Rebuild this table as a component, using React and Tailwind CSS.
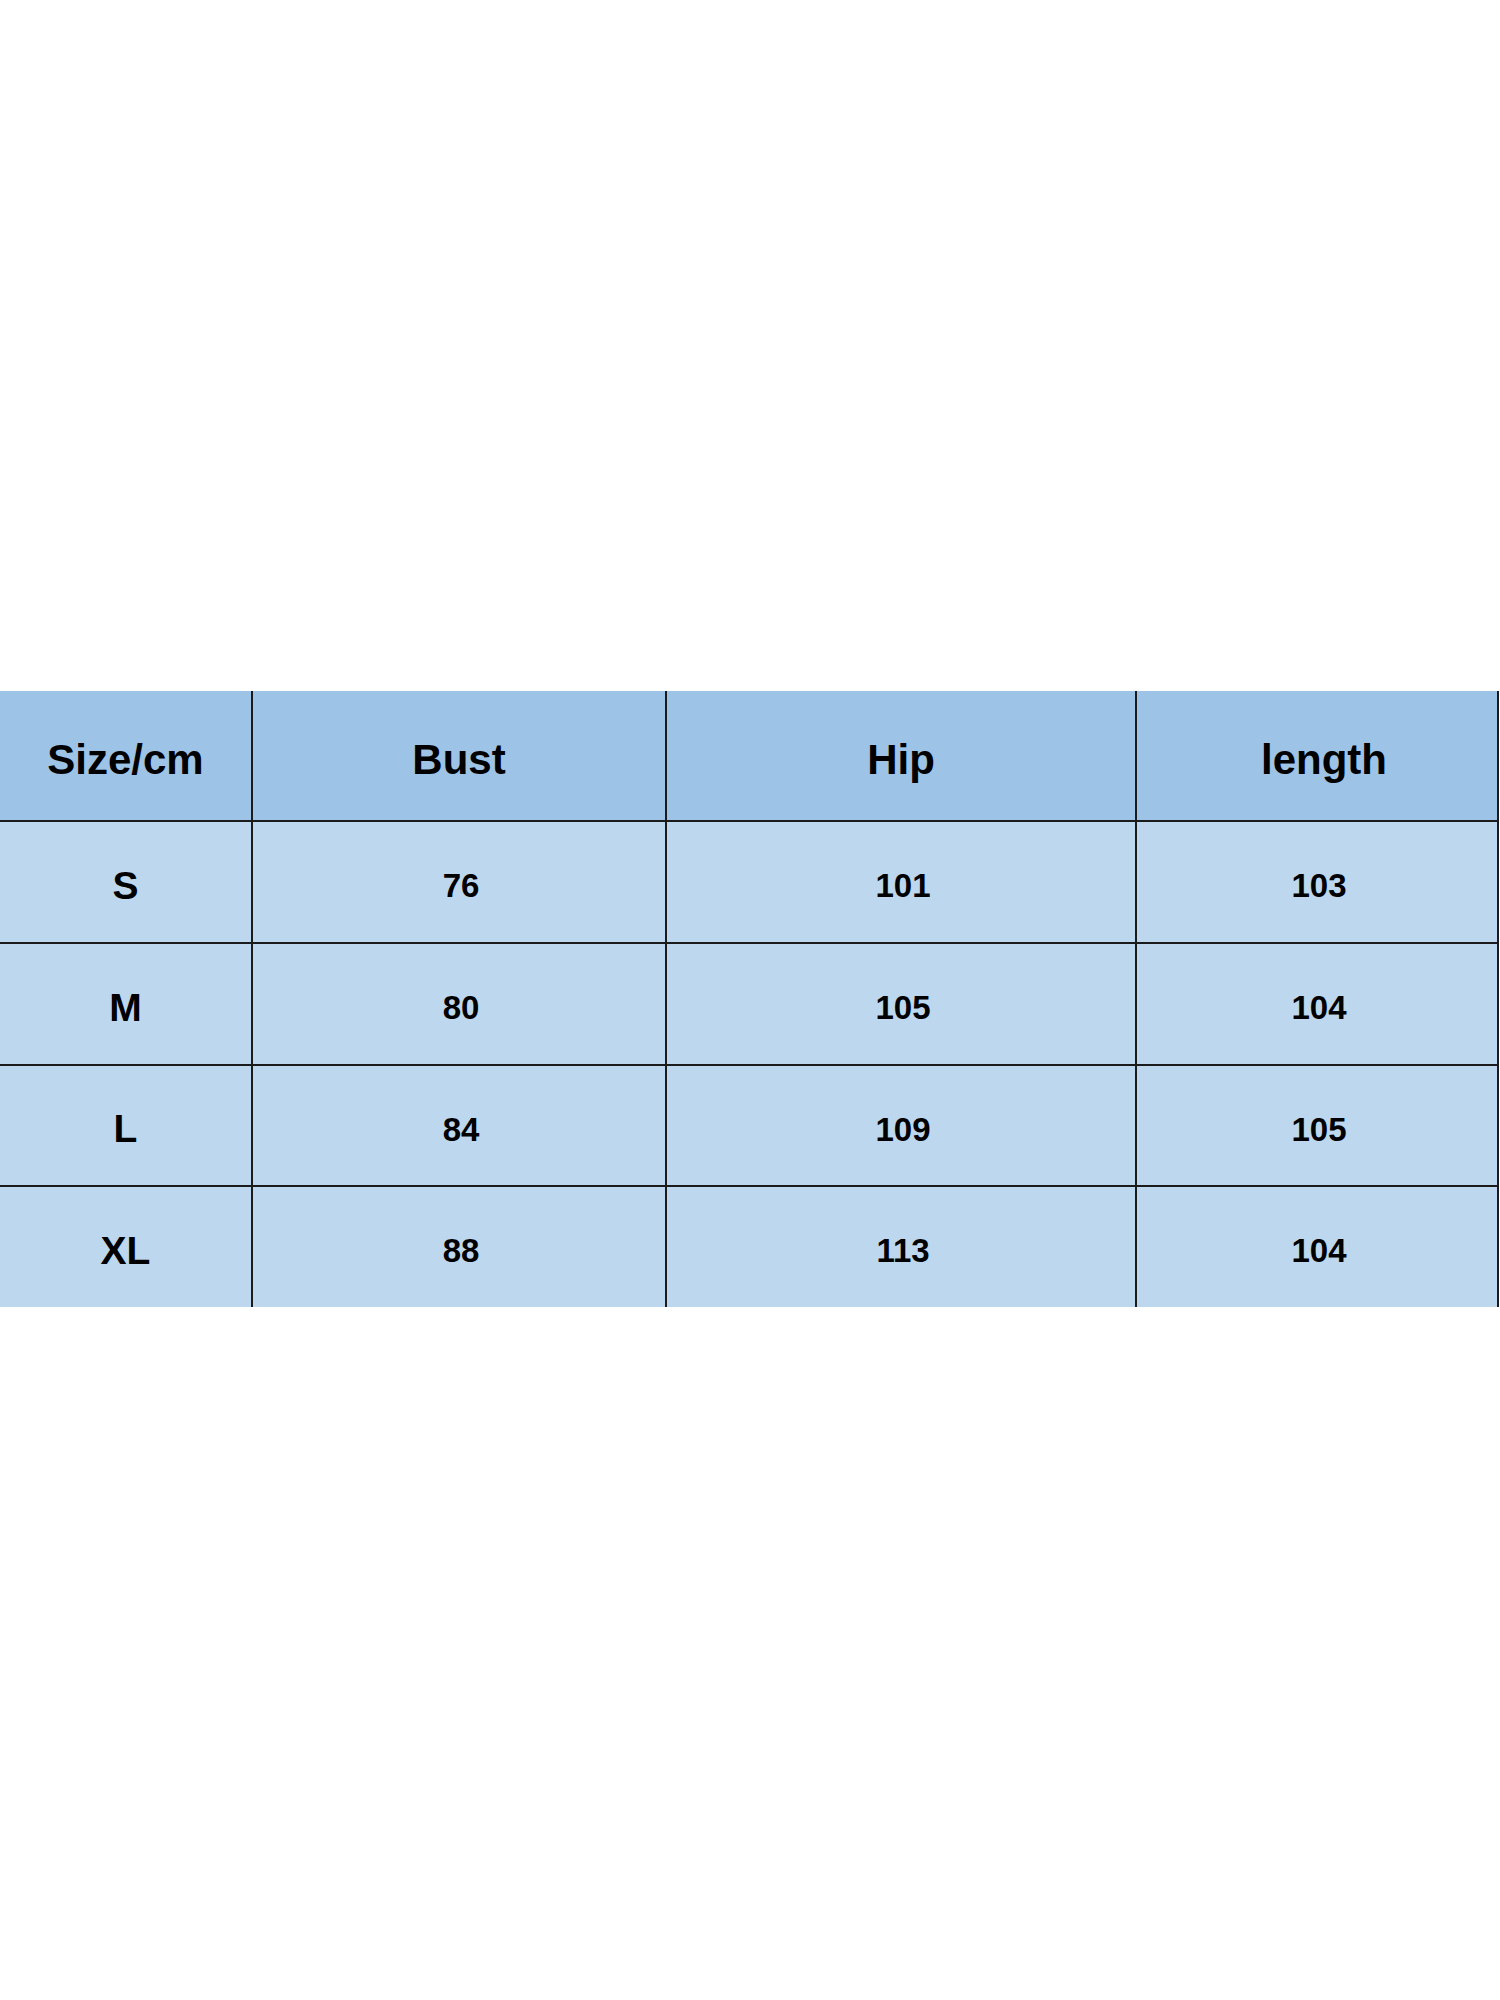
const headers = ["Size/cm", "Bust", "Hip", "length"]

const rows = [
  { size: "S", bust: 76, hip: 101, length: 103, h: "h-[122px]" },
  { size: "M", bust: 80, hip: 105, length: 104, h: "h-[122px]" },
  { size: "L", bust: 84, hip: 109, length: 105, h: "h-[121px]" },
  { size: "XL", bust: 88, hip: 113, length: 104, h: "h-[120px]" },
]

export default function App() {
  return (
    <div className="min-h-[2000px] bg-white pt-[691px] font-['Liberation_Sans',Arial,sans-serif] text-black">
      <div className="w-[1499px]">
        <div className="grid h-[131px] grid-cols-[253px_414px_470px_362px] border-b-2 border-[#1b1b1b] bg-[#9dc3e6] text-[42px] font-bold">
          {headers.map((h, i) => (
            <div
              key={h}
              className={
                "flex items-center justify-center border-r-2 border-[#1b1b1b] pt-[8px]" +
                (i === 3 ? " pl-[14px]" : "")
              }
            >
              {h}
            </div>
          ))}
        </div>
        {rows.map((r, idx) => (
          <div
            key={r.size}
            className={
              "grid grid-cols-[253px_414px_470px_362px] bg-[#bdd7ee] font-bold " +
              r.h +
              (idx < rows.length - 1 ? " border-b-2 border-[#1b1b1b]" : "")
            }
          >
            <div className="flex items-center justify-center border-r-2 border-[#1b1b1b] pt-[8px] text-[39px]">
              {r.size}
            </div>
            <div className="flex items-center justify-center border-r-2 border-[#1b1b1b] pl-[4px] pt-[8px] text-[33px]">
              {r.bust}
            </div>
            <div className="flex items-center justify-center border-r-2 border-[#1b1b1b] pl-[4px] pt-[8px] text-[33px]">
              {r.hip}
            </div>
            <div className="flex items-center justify-center border-r-2 border-[#1b1b1b] pl-[4px] pt-[8px] text-[33px]">
              {r.length}
            </div>
          </div>
        ))}
      </div>
    </div>
  )
}
